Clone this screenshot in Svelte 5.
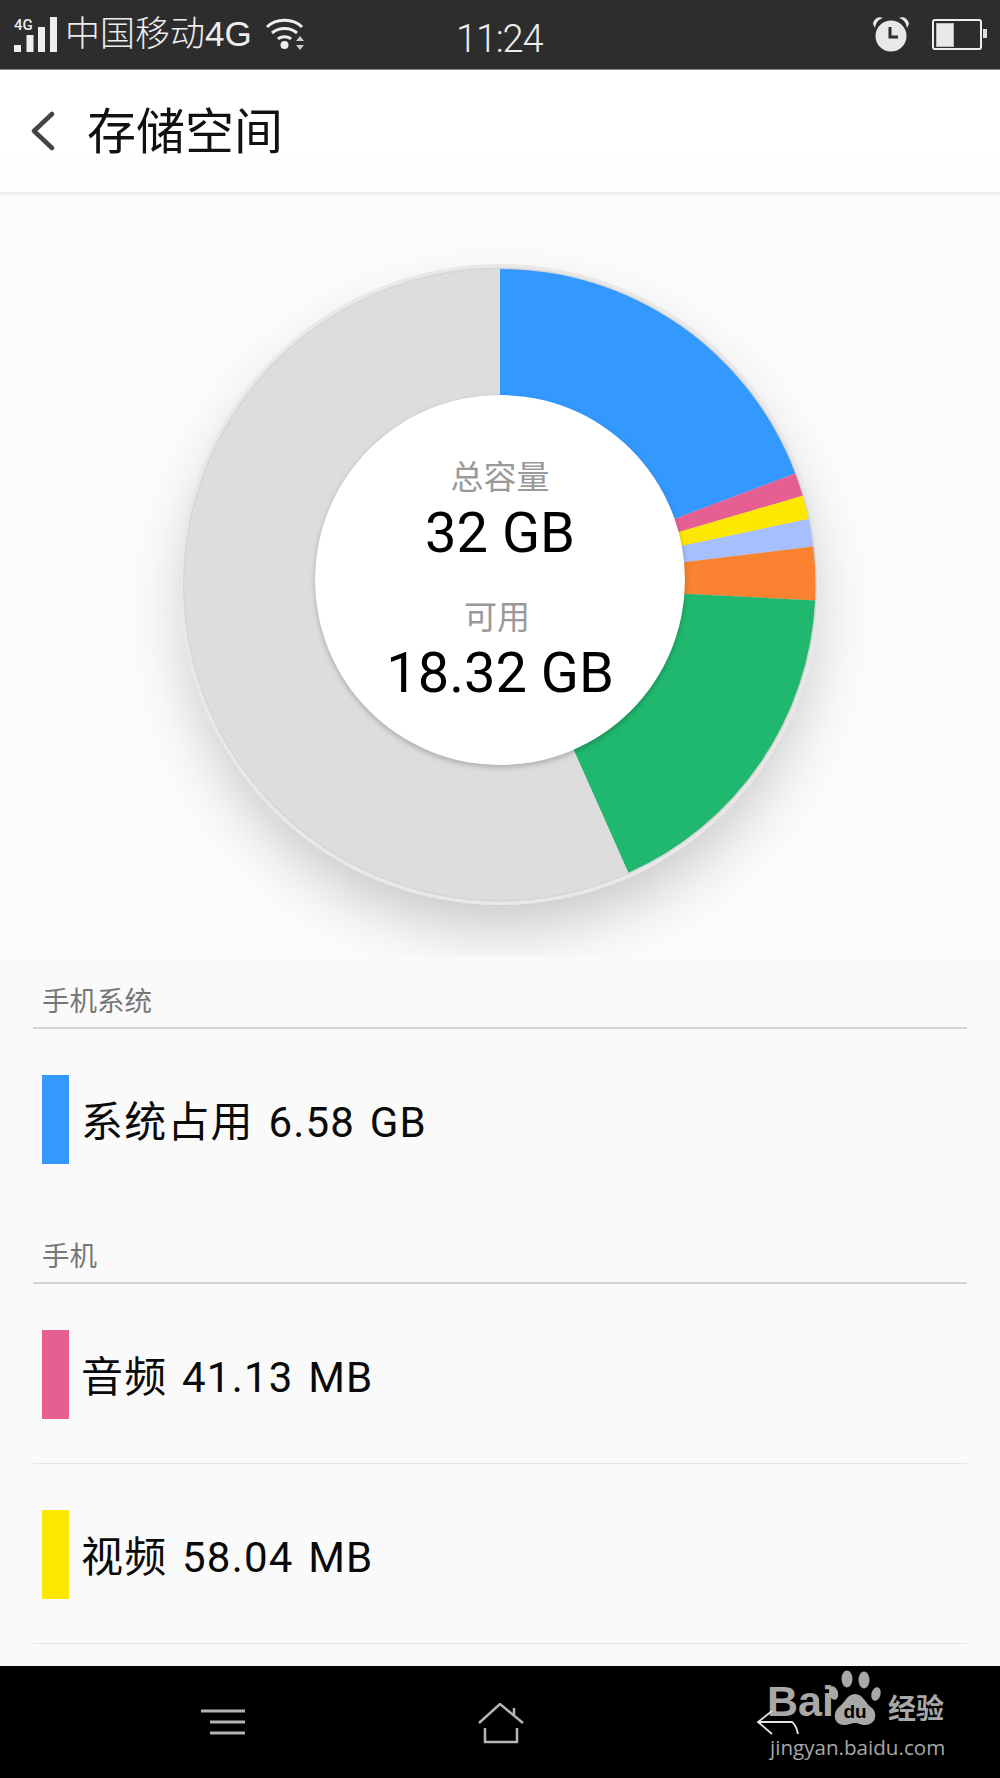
<script>
  const cx = 500;
  const cy = 392.5;
  const r = 315.5;

  // end angles in degrees, clockwise from twelve o'clock
  const slices = [
    { color: '#3399ff', end: 69.4 },
    { color: '#e65f93', end: 73.65 },
    { color: '#fde800', end: 78 },
    { color: '#a6bfff', end: 83.1 },
    { color: '#fa8231', end: 92.9 },
    { color: '#1fb86e', end: 156 },
    { color: '#dddddd', end: 360 }
  ];

  function point(deg) {
    const a = (deg * Math.PI) / 180;
    return `${(cx + r * Math.sin(a)).toFixed(2)} ${(cy - r * Math.cos(a)).toFixed(2)}`;
  }

  const wedges = slices.map((s, i) => {
    const start = i === 0 ? 0 : slices[i - 1].end;
    const large = s.end - start > 180 ? 1 : 0;
    return {
      color: s.color,
      d: `M${cx} ${cy} L${point(start)} A${r} ${r} 0 ${large} 1 ${point(s.end)} Z`
    };
  });

  const groups = [
    { title: '手机系统', items: [{ color: '#3399ff', label: '系统占用 6.58 GB' }], lined: false },
    {
      title: '手机',
      items: [
        { color: '#e65f93', label: '音频 41.13 MB' },
        { color: '#fde800', label: '视频 58.04 MB' }
      ],
      lined: true
    }
  ];
</script>

<div class="page">
  <div class="statusbar">
    <div class="signal">
      <span class="net">4G</span>
      <svg width="43" height="36" viewBox="0 0 43 36" fill="#eeeeee">
        <rect x="0" y="28" width="7" height="7" />
        <rect x="12.5" y="18" width="7" height="17" />
        <rect x="24" y="10" width="7" height="25" />
        <rect x="36" y="0" width="7" height="35" />
      </svg>
    </div>
    <span class="carrier">中国移动4G</span>
    <svg class="wifi" width="39" height="34" viewBox="0 0 39 34" fill="none" stroke="#eeeeee" stroke-width="3">
      <path d="M1 10 C10 1 27 1 36 10" />
      <path d="M6 16 C13 10 24 10 31 16" />
      <path d="M12 22 C15 19 22 19 25 22" />
      <circle cx="18.5" cy="28" r="4" fill="#eeeeee" stroke="none" />
      <path d="M34 19 L38 24 L30 24 Z M34 33 L38 28 L30 28 Z" fill="#cccccc" stroke="none" />
    </svg>
    <span class="time">11:24</span>
    <svg class="alarm" width="38" height="36" viewBox="0 0 38 36">
      <circle cx="19" cy="20" r="15.5" fill="#e8e8e8" />
      <path d="M1 8 C2 2 7 0 11 2 C7 3 4 6 3 12 Z" fill="#e8e8e8" />
      <path d="M37 8 C36 2 31 0 27 2 C31 3 34 6 35 12 Z" fill="#e8e8e8" />
      <path d="M18 11 V21 H26" fill="none" stroke="#2d2d2d" stroke-width="3" />
    </svg>
    <div class="battery"><div class="charge"></div></div>
  </div>

  <header class="topbar">
    <svg class="back" width="26" height="40" viewBox="0 0 26 40" fill="none" stroke="#444444" stroke-width="4.5" stroke-linecap="round" stroke-linejoin="round">
      <path d="M22 3 L4 20 L22 37" />
    </svg>
    <h1>存储空间</h1>
  </header>

  <main>
    <section class="chart">
      <svg width="1000" height="765" viewBox="0 0 1000 765">
        <defs>
          <filter id="drop" x="-30%" y="-30%" width="160%" height="160%">
            <feGaussianBlur stdDeviation="32" />
          </filter>
          <filter id="soft" x="-10%" y="-10%" width="120%" height="120%">
            <feGaussianBlur stdDeviation="2.5" />
          </filter>
        </defs>
        <circle cx={cx} cy={cy + 30} r={r - 4} fill="#000000" fill-opacity="0.22" filter="url(#drop)" />
        <circle cx={cx} cy={cy} r={r + 5} fill="#e8e8e8" />
        <circle cx={cx} cy={cy} r={r + 1.5} fill="#d6d6d6" />
        {#each wedges as wedge}
          <path d={wedge.d} fill={wedge.color} />
        {/each}
        <circle cx={cx} cy={cy - 2} r="185.5" fill="#000000" fill-opacity="0.2" filter="url(#soft)" />
        <circle cx={cx} cy={cy - 4.5} r="185" fill="#ffffff" />
      </svg>
      <div class="capacity">
        <span class="cap-label">总容量</span>
        <span class="cap-value">32 GB</span>
        <span class="cap-label second">可用</span>
        <span class="cap-value">18.32 GB</span>
      </div>
    </section>

    {#each groups as group}
      <section class="group">
        <h2>{group.title}</h2>
        {#each group.items as item}
          <div class="row" class:lined={group.lined}>
            <span class="swatch" style="background: {item.color}"></span>
            <span class="row-label">{item.label}</span>
          </div>
        {/each}
      </section>
    {/each}
  </main>

  <nav class="navbar">
    <svg class="menu" width="46" height="26" viewBox="0 0 46 26" stroke="#b4b4b4" stroke-width="3">
      <path d="M1 2 H45 M10 13 H45 M10 24 H45" />
    </svg>
    <svg class="home" width="48" height="42" viewBox="0 0 48 42" fill="none" stroke="#b4b4b4" stroke-width="2.5">
      <path d="M2 20 L23 1 L46 20 M37 5 V13" />
      <path d="M8 25 V39 H40 V25" />
    </svg>
    <div class="mark">
      <div class="mark-top">
        <span class="mark-bai">Bai</span>
        <div class="paw">
          <svg width="52" height="56" viewBox="0 0 52 56" fill="#a8a8a8">
            <ellipse cx="4.5" cy="23" rx="4.5" ry="7" transform="rotate(-15 4.5 23)" />
            <ellipse cx="18" cy="9" rx="5.5" ry="8.5" />
            <ellipse cx="35" cy="10" rx="5.5" ry="8.5" />
            <ellipse cx="47" cy="24" rx="4.5" ry="7" transform="rotate(15 47 24)" />
            <path d="M26 24 C34 24 36 33 43 38 C49 43 47 55 36 55 C31 55 30 53 26 53 C22 53 20 55 15 55 C5 55 3 43 10 37 C16 33 18 24 26 24 Z" />
          </svg>
          <span class="paw-du">du</span>
        </div>
        <span class="mark-cn">经验</span>
      </div>
      <span class="mark-url">jingyan.baidu.com</span>
    </div>
    <svg class="nav-back" width="50" height="40" viewBox="0 0 50 40" fill="none" stroke="#e4e4e4" stroke-width="1.8">
      <path d="M16 2 L2 13 L16 25 M2 13 H36 C40 16 41 20 42 25" />
    </svg>
  </nav>
</div>

<style>
  :global(body) {
    margin: 0;
  }

  .page {
    width: 1000px;
    height: 1778px;
    display: flex;
    flex-direction: column;
    overflow: hidden;
    background: #fafafa;
    font-family: Roboto, "Noto Sans CJK SC", sans-serif;
  }

  .statusbar {
    flex: none;
    height: 69px;
    display: flex;
    align-items: flex-start;
    background: #2d2d2d;
    border-bottom: 1px solid #8a8a8a;
    color: #eeeeee;
    position: relative;
    z-index: 2;
  }

  .signal {
    position: relative;
    flex: none;
    width: 43px;
    height: 36px;
    margin: 17px 0 0 14px;
  }

  .net {
    position: absolute;
    left: 0;
    top: 1px;
    font-size: 15px;
    line-height: 14px;
    font-weight: 500;
  }

  .carrier {
    flex: none;
    width: 191px;
    margin: 12px 0 0 8px;
    font-family: "Liberation Sans", "Noto Sans CJK SC", sans-serif;
    font-size: 35px;
    line-height: 44px;
    font-weight: 300;
    white-space: nowrap;
  }

  .wifi {
    flex: none;
    margin: 17px 0 0 10px;
  }

  .time {
    flex: none;
    width: 87px;
    margin: 18px 0 0 151px;
    font-size: 38px;
    line-height: 42px;
    font-weight: 300;
    letter-spacing: -1.2px;
    white-space: nowrap;
  }

  .alarm {
    flex: none;
    margin: 16px 0 0 329px;
  }

  .battery {
    flex: none;
    position: relative;
    box-sizing: border-box;
    width: 50px;
    height: 31px;
    margin: 19px 0 0 22px;
    border: 2.5px solid #eeeeee;
    border-radius: 3px;
    padding: 1.5px;
  }

  .battery::after {
    content: "";
    position: absolute;
    right: -7px;
    top: 8px;
    width: 4px;
    height: 9px;
    background: #dddddd;
  }

  .charge {
    width: 18px;
    height: 100%;
    background: #e8e8e8;
    box-sizing: border-box;
    border: 1px solid #bbbbbb;
  }

  .topbar {
    flex: none;
    box-sizing: border-box;
    height: 122px;
    display: flex;
    align-items: center;
    padding-left: 30px;
    background: linear-gradient(#ffffff 60%, #fdfdfd);
    box-shadow: 0 1px 4px rgba(0, 0, 0, 0.12);
    position: relative;
    z-index: 1;
  }

  .back {
    margin-right: 31px;
  }

  h1 {
    margin: 4px 0 0;
    font-size: 49px;
    font-weight: 400;
    line-height: 56px;
    color: #111111;
  }

  main {
    flex: 1;
    min-height: 0;
    overflow: hidden;
  }

  .chart {
    position: relative;
    height: 765px;
    overflow: hidden;
    background: #fcfcfc;
  }

  .chart svg {
    display: block;
  }

  .capacity {
    position: absolute;
    inset: 0;
    padding-top: 264px;
    display: flex;
    flex-direction: column;
    align-items: center;
  }

  .cap-label {
    font-size: 33px;
    line-height: 44px;
    color: #999999;
  }

  .cap-label.second {
    margin: 30px 6px 0 0;
  }

  .cap-value {
    font-size: 56px;
    line-height: 66px;
    color: #000000;
  }

  .group {
    margin: 0 33px;
  }

  h2 {
    box-sizing: border-box;
    height: 72px;
    margin: 0;
    padding: 27px 0 0 9px;
    font-size: 27.5px;
    line-height: 36px;
    font-weight: 400;
    color: #777777;
    border-bottom: 2px solid #d4d4d4;
  }

  .row {
    box-sizing: border-box;
    display: flex;
    align-items: center;
    height: 183px;
    padding: 0 0 2px 9px;
  }

  .row.lined {
    height: 180px;
    padding: 2px 0 0 9px;
    border-bottom: 1px solid #e6e6e6;
  }

  .swatch {
    flex: none;
    width: 27px;
    height: 89px;
    margin-right: 12px;
  }

  .row-label {
    padding-top: 7px;
    font-size: 42px;
    line-height: 50px;
    letter-spacing: 1.2px;
    word-spacing: 3px;
    color: #0a0a0a;
  }

  .navbar {
    flex: none;
    position: relative;
    height: 112px;
    background: #000000;
  }

  .menu {
    position: absolute;
    left: 200px;
    top: 43px;
  }

  .home {
    position: absolute;
    left: 477px;
    top: 37px;
  }

  .mark {
    position: absolute;
    left: 767px;
    top: 4px;
    color: #a8a8a8;
  }

  .mark-top {
    display: flex;
    align-items: flex-end;
  }

  .mark-bai {
    width: 62px;
    font-family: "Liberation Sans", sans-serif;
    font-size: 43px;
    line-height: 43px;
    font-weight: 700;
    margin-bottom: 3px;
  }

  .paw {
    position: relative;
    width: 52px;
    height: 56px;
  }

  .paw-du {
    position: absolute;
    left: 0;
    right: 0;
    bottom: 5px;
    text-align: center;
    font-family: "Liberation Sans", sans-serif;
    font-size: 19px;
    line-height: 19px;
    font-weight: 700;
    color: #000000;
  }

  .mark-cn {
    margin: 0 0 -2px 7px;
    font-size: 28px;
    line-height: 36px;
    font-weight: 700;
  }

  .mark-url {
    display: block;
    margin: 7px 0 0 3px;
    font-family: "Open Sans", sans-serif;
    font-size: 20.6px;
    line-height: 28px;
    white-space: nowrap;
  }

  .nav-back {
    position: absolute;
    left: 756px;
    top: 43px;
  }
</style>
